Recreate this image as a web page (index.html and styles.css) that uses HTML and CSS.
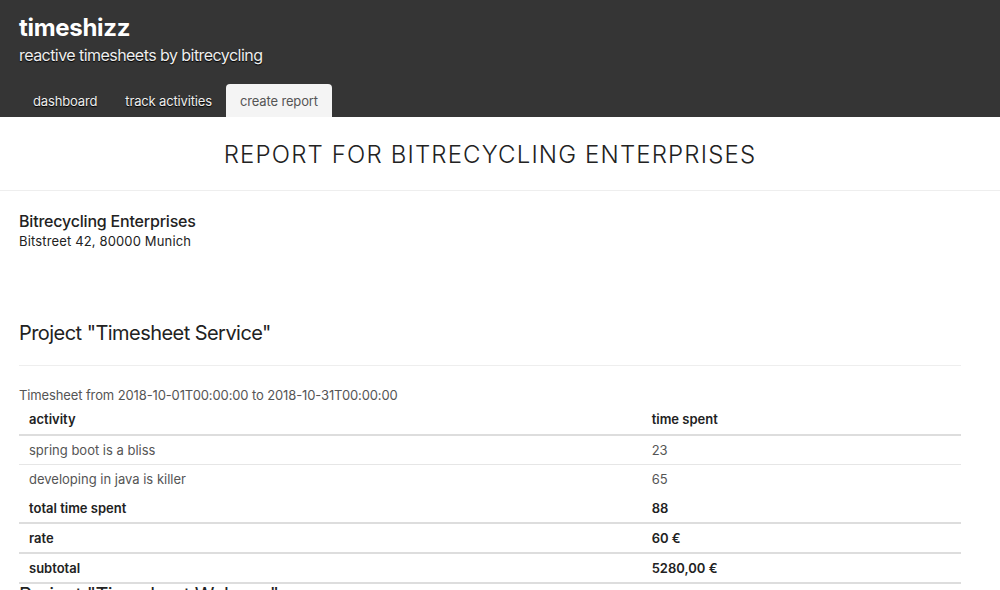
FILE: index.html
```html
<!DOCTYPE html>
<html>
<head>
<meta charset="utf-8">
<link rel="stylesheet" href="styles.css">
</head>
<body>
<header class="app-header">
  <h1 class="brand">timeshizz</h1>
  <p class="tagline">reactive timesheets by bitrecycling</p>
  <nav class="tabs">
    <a class="tab">dashboard</a>
    <a class="tab">track activities</a>
    <a class="tab active">create report</a>
  </nav>
</header>
<section class="report-title">
  <h2>REPORT FOR BITRECYCLING ENTERPRISES</h2>
</section>
<main class="content">
  <div class="customer">
    <div class="customer-name">Bitrecycling Enterprises</div>
    <div class="customer-address">Bitstreet 42, 80000 Munich</div>
  </div>
  <section class="project">
    <h3 class="project-title">Project "Timesheet Service"</h3>
    <hr class="divider">
    <p class="period">Timesheet from 2018-10-01T00:00:00 to 2018-10-31T00:00:00</p>
    <table class="sheet">
      <thead>
        <tr><th class="c1">activity</th><th>time spent</th></tr>
      </thead>
      <tbody>
        <tr class="row first"><td>spring boot is a bliss</td><td>23</td></tr>
        <tr class="row"><td>developing in java is killer</td><td>65</td></tr>
        <tr class="sum"><td>total time spent</td><td>88</td></tr>
        <tr class="sum"><td>rate</td><td>60 €</td></tr>
        <tr class="sum"><td>subtotal</td><td>5280,00 €</td></tr>
      </tbody>
    </table>
  </section>
  <section class="project next">
    <h3 class="project-title">Project "Timesheet Webapp"</h3>
  </section>
</main>
</body>
</html>
```

FILE: styles.css
```css
* { box-sizing: border-box; }
html, body { margin: 0; padding: 0; }
body {
  font-family: Inter, "Noto Sans", sans-serif;
  color: #222;
  background: #fff;
  overflow: hidden;
  height: 590px;
}
.app-header {
  background: #353535;
  padding: 15px 19px 0 19px;
  height: 117px;
  display: flex;
  flex-direction: column;
}
.brand {
  margin: 0;
  font-size: 24px;
  line-height: 26px;
  font-weight: 700;
  color: #fff;
  letter-spacing: -0.3px;
}
.tagline {
  margin: 4px 0 0 0;
  font-size: 16px;
  line-height: 20px;
  color: #eee;
  text-shadow: 0 1px 1px #000;
  letter-spacing: -0.55px;
}
.tabs {
  margin-top: auto;
  display: flex;
  height: 33px;
}
.tab {
  padding: 0 14px;
  font-size: 13px;
  line-height: 35px;
  color: #eee;
  text-shadow: 0 1px 1px #000;
  letter-spacing: -0.15px;
}
.tab.active {
  background: #f4f4f4;
  color: #555;
  text-shadow: none;
  border-radius: 4px 4px 0 0;
}
.report-title {
  border-bottom: 1px solid #eee;
  height: 74px;
  display: flex;
  align-items: center;
  justify-content: center;
  padding: 2px 20px 0 0;
}
.report-title h2 {
  margin: 0;
  font-size: 24px;
  font-weight: 300;
  color: #222;
  letter-spacing: 1.15px;
}
.content {
  padding: 20px 39px 0 19px;
}
.customer-name {
  font-size: 16px;
  line-height: 20px;
  font-weight: 500;
  letter-spacing: -0.2px;
}
.customer-address {
  font-size: 13px;
  line-height: 18px;
  margin-top: 1px;
  letter-spacing: 0.15px;
}
.project { margin-top: 71px; }
.project.next { margin-top: 0; }
.project-title {
  margin: 0;
  font-size: 20px;
  line-height: 24px;
  font-weight: 400;
  letter-spacing: -0.55px;
}
.next .project-title { margin-top: -1px; }
.divider {
  margin: 20px 0 0 0;
  border: 0;
  border-top: 1px solid #eee;
}
.period {
  margin: 21px 0 2px 0;
  font-size: 13px;
  line-height: 16px;
  color: #555;
  letter-spacing: -0.12px;
}
.sheet {
  width: 100%;
  border-collapse: collapse;
  font-size: 13px;
}
.sheet th, .sheet td {
  text-align: left;
  padding: 0 10px;
  height: 29.6px;
}
.sheet th {
  font-weight: 600;
  border-bottom: 2px solid #ddd;
  color: #222;
}
.sheet th.c1 { width: 66.1%; }
.row td { color: #555; }
.row.first td { border-bottom: 1px solid #e6e6e6; }
.sum td {
  font-weight: 600;
  color: #222;
  border-bottom: 2px solid #ddd;
}
```
